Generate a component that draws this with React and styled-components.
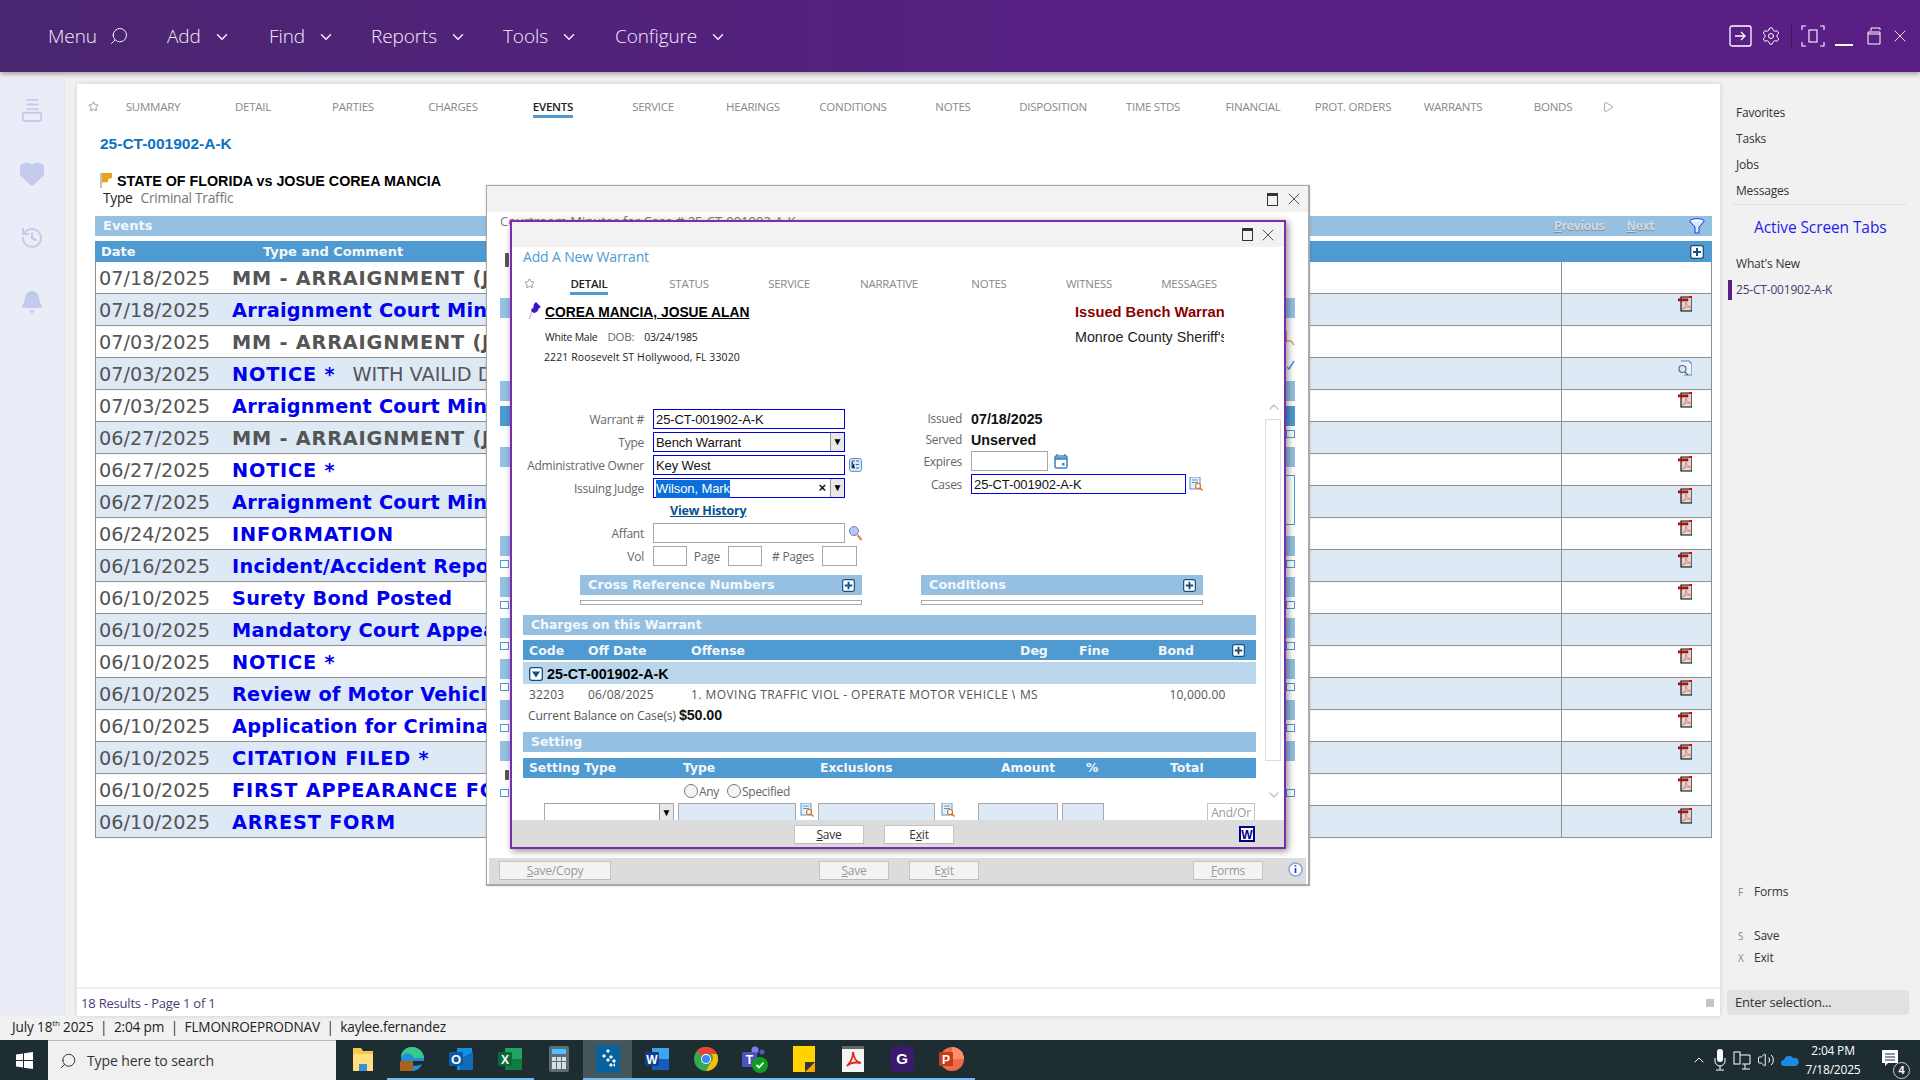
import React from 'react';
import styled, { createGlobalStyle } from 'styled-components';
import { Search, ChevronDown, Settings, X, Star, Heart, History, Bell, ChevronUp, Play, Volume2 } from 'lucide-react';

const Global = createGlobalStyle`
  html, body { margin: 0; padding: 0; width: 1920px; height: 1080px; overflow: hidden; background: #f1f1f2; }
  * { box-sizing: border-box; }
  body { font-family: "Open Sans", "Liberation Sans", sans-serif; }
`;
const VERDANA = `"DejaVu Sans", Verdana, sans-serif`;
const ARIAL = `"Liberation Sans", Arial, sans-serif`;

const Page = styled.div`width:1920px;height:1080px;display:flex;flex-direction:column;position:relative;overflow:hidden;`;
const TopBar = styled.header`height:72px;flex:none;background:linear-gradient(90deg,#4a2670,#581f84 60%,#591f85);display:flex;align-items:center;justify-content:space-between;padding-left:48px;box-shadow:0 2px 5px rgba(0,0,0,.35);position:relative;z-index:2;`;
const NavGrid = styled.nav`display:grid;grid-template-columns:119px 102px 102px 132px 112px auto;align-items:center;`;
const NavItem = styled.div`display:flex;align-items:center;gap:12px;color:#f4eefa;font-size:19px;font-weight:300;letter-spacing:-.1px;`;
const Caret = styled.span`display:inline-flex;margin-top:2px;`;
const Flip = styled.span`display:inline-flex;transform:scaleX(-1);`;
const WinTools = styled.div`display:flex;align-items:center;color:#fff;padding-right:10px;`;
const ToolBox = styled.span`display:inline-flex;align-items:center;justify-content:center;width:${p => p.$w}px;height:24px;margin-left:${p => p.$ml || 0}px;`;
const ToolSep = styled.span`width:1px;height:24px;background:#3d1460;margin:0 9px 0 10px;`;

const Main = styled.div`flex:1;display:flex;min-height:0;`;
const SideRail = styled.aside`width:65px;margin-top:6px;background:#eaedf7;display:flex;flex-direction:column;align-items:center;gap:40px;padding-top:20px;color:#c3cbea;border-right:1px solid #e3e5ee;`;
const Card = styled.section`width:1643px;margin:12px 0 0 12px;background:#fff;box-shadow:0 0 5px rgba(0,0,0,.14);display:flex;flex-direction:column;position:relative;`;
const TabRow = styled.div`display:flex;align-items:flex-start;height:21px;margin-left:${p => p.$ml || 0}px;margin-top:${p => p.$mt}px;`;
const StarCell = styled.span`width:26px;flex:none;display:flex;justify-content:center;color:#666;padding:3px 0 0 6px;`;
const TabCell = styled.div`width:100px;display:flex;justify-content:center;flex:none;`;
const TabLabel = styled.span`font-size:11.5px;line-height:17px;height:20px;letter-spacing:-.25px;color:${p => p.$active ? '#222' : '#888'};font-weight:${p => p.$active ? 600 : 400};border-bottom:${p => p.$active ? '3px solid #4f9ad0' : 'none'};`;
const MoreArrow = styled.span`display:flex;margin:3px 0 0 -1px;color:#555;`;
const CaseNo = styled.h2`margin:15px 0 0 23px;height:20px;font:bold 15.5px/20px ${ARIAL};color:#0b72c4;`;
const TitleRow = styled.div`margin:18px 0 0 23px;height:18px;display:flex;align-items:center;gap:4px;font:bold 14.3px/18px ${ARIAL};color:#000;`;
const TypeRow = styled.div`margin:-1px 0 0 26px;height:17px;display:flex;gap:8px;font-size:13.8px;line-height:17px;letter-spacing:-.3px;color:#222;`;
const Muted = styled.span`color:#777;`;
const EventsWrap = styled.div`margin:10px 8px 0 18px;`;
const LightBar = styled.div`height:20px;background:#95c0e2;color:#f3f8fc;font:bold 13px/20px ${VERDANA};padding-left:8px;display:flex;align-items:center;`;
const BarSpacer = styled.span`flex:1;`;
const FilterGap = styled.span`width:7px;flex:none;`;
const GhostLink = styled.span`font:bold 11.5px/20px ${VERDANA};color:#cad9e8;text-shadow:0 1px 1px #8a8a8a;margin-right:${p => p.$mr}px;letter-spacing:-.7px;& u{text-decoration:underline;}`;
const HeadRow = styled.div`margin-top:5px;height:21px;background:#4f9ad0;color:#f2f7fb;font:bold 13px/21px ${VERDANA};display:flex;align-items:center;`;
const HeadCell = styled.span`width:${p => p.$w}px;padding-left:${p => p.$pl}px;flex:none;`;
const EventRow = styled.div`height:32px;display:grid;grid-template-columns:136px 1fr 150px;background:${p => p.$alt ? '#dde9f4' : '#fff'};border:1px solid #909090;border-top:none;`;
const DateCell = styled.div`font:19.3px/33px ${VERDANA};color:#555;padding-left:3px;overflow:hidden;`;
const TypeCell = styled.div`white-space:nowrap;overflow:hidden;font:bold 19.3px/33px ${VERDANA};letter-spacing:${p => p.$caps ? .8 : .25}px;color:${p => p.$link ? '#0000ee' : '#555'};`;
const Comment = styled.span`font-weight:400;color:#555;margin-left:17px;letter-spacing:0;`;
const ActionCell = styled.div`border-left:1px solid #909090;display:flex;justify-content:flex-end;padding:2px 19px 0 0;`;
const CardFoot = styled.footer`margin-top:auto;height:29px;border-top:2px solid #f0f0f0;display:flex;align-items:center;justify-content:space-between;padding:0 6px 0 4px;font-size:13px;color:#4b3a72;letter-spacing:-.2px;`;
const MiniSquare = styled.span`width:8px;height:8px;background:#c4c4c4;`;

const RightPanel = styled.aside`flex:1;display:flex;flex-direction:column;padding:28px 11px 0 7px;`;
const PanelLink = styled.div`height:26px;line-height:26px;padding-left:9px;font-size:12px;letter-spacing:-.2px;color:#333;`;
const PanelRule = styled.div`height:1px;background:#e2e2e2;margin:0 2px 0 5px;`;
const ActiveTitle = styled.div`height:30px;margin:7px 0 9px 27px;font-size:15.5px;line-height:30px;color:#1d1dee;letter-spacing:-.1px;white-space:nowrap;`;
const CurrentTab = styled.div`height:20px;line-height:20px;margin:3px 0 0 1px;padding-left:4px;border-left:4px solid #581f84;font-size:12px;letter-spacing:-.2px;color:#4b3a72;`;
const ShortcutRow = styled.div`display:flex;height:22px;line-height:22px;font-size:12px;letter-spacing:-.2px;padding-left:11px;color:#333;margin-top:${p => p.$mt || 0}px;`;
const ShortcutKey = styled.span`width:16px;color:#888;font-size:10px;`;
const EnterBox = styled.div`height:25px;margin-top:21px;background:#e1e1e1;border-radius:4px;padding-left:8px;font-size:13px;line-height:25px;color:#333;letter-spacing:-.2px;width:182px;`;

const StatusBar = styled.div`height:24px;flex:none;padding-left:12px;font-size:13.6px;line-height:22px;color:#222;letter-spacing:-.15px;& sup{font-size:8px;line-height:0;}& i{font-style:normal;margin:0 6.5px;color:#333;}`;
const Taskbar = styled.footer`height:40px;flex:none;background:#1d2d32;display:flex;align-items:stretch;position:relative;`;
const WinStart = styled.div`width:48px;display:flex;align-items:center;justify-content:center;`;
const SearchBox = styled.div`width:288px;background:#f0f0f0;border-top:1px solid #bbb;display:flex;align-items:center;gap:10px;padding-left:11px;font-size:14px;color:#333;letter-spacing:-.1px;`;
const AppList = styled.div`display:flex;margin-left:2px;`;
const AppSlot = styled.div`width:49px;display:flex;align-items:center;justify-content:center;background:${p => p.$active ? '#46565b' : 'transparent'};border-bottom:2px solid ${p => p.$open ? '#76b9ed' : 'transparent'};`;
const Tray = styled.div`margin-left:auto;display:flex;align-items:center;color:#fff;padding-right:10px;gap:6px;`;
const Clock = styled.div`width:68px;text-align:center;font-size:12px;line-height:19px;color:#fff;letter-spacing:-.2px;margin-left:-6px;`;
const NoteWrap = styled.div`position:relative;width:28px;height:32px;margin-left:9px;`;
const NoteGlyph = styled.svg`display:block;margin-top:6px;`;
const NoteBadge = styled.span`position:absolute;right:0;bottom:-3px;width:17px;height:17px;border-radius:50%;background:#1d2d32;border:1px solid #ccc;color:#fff;font:bold 11px/15px ${ARIAL};text-align:center;`;

/* Windows on the desktop */
const Outer = styled.div`position:absolute;left:486px;top:185px;width:824px;height:701px;background:#fff;border:1px solid #aaa;border-width:1px 2px 2px 1px;display:flex;flex-direction:column;z-index:3;box-shadow:0 0 2px rgba(0,0,0,.2);`;
const WinTitle = styled.div`height:${p => p.$h}px;flex:none;background:#f2f2f2;display:flex;align-items:center;justify-content:flex-end;gap:${p => p.$gap}px;padding-right:${p => p.$pr}px;color:#333;`;
const RestoreGlyph = styled.span`width:11px;height:13px;border:1px solid #333;border-top-width:3px;display:block;`;
const OuterBody = styled.div`flex:1;padding:1px 13px 0 13px;overflow:hidden;`;
const OuterCaption = styled.div`height:16px;font-size:13px;line-height:16px;color:#777;`;
const UnderBar = styled.div`height:20px;margin-top:${p => p.$mt}px;background:${p => p.$dark ? '#4f9ad0' : '#95c0e2'};`;
const UnderSquares = styled.div`height:8px;margin-top:${p => p.$mt}px;display:flex;justify-content:space-between;`;
const UnderSquare = styled.span`width:9px;height:8px;border:1px solid #4f9ad0;background:#fff;`;
const UnderMarks = styled.div`height:${p => p.$h}px;margin-top:${p => p.$mt}px;display:flex;justify-content:space-between;align-items:flex-start;`;
const UnderStub = styled.span`width:4px;height:${p => p.$h}px;background:#555;border-radius:1px;margin-left:5px;`;
const UnderTall = styled.span`width:10px;height:${p => p.$h}px;border:1px solid #4f9ad0;border-left:none;`;
const OuterFoot = styled.div`height:26px;flex:none;background:#dcdcdc;margin:0 2px;display:flex;align-items:center;padding:0 3px 1px 10px;gap:20px;`;
const GhostBtn = styled.button`width:${p => p.$w}px;height:19px;background:#f3f3f3;border:1px solid #c4c4c4;border-bottom-color:#bbb;font-size:12px;line-height:15px;color:#999;padding:0;margin-left:${p => p.$ml || 0}px;font-family:"Open Sans",sans-serif;letter-spacing:-.2px;`;
const Btn = styled(GhostBtn)`background:#fff;color:#333;`;
const Inner = styled.div`position:absolute;left:510px;top:220px;width:776px;height:629px;background:#fff;border:2px solid #7a2db0;display:flex;flex-direction:column;z-index:4;box-shadow:2px 2px 7px rgba(0,0,0,.45);`;
const InnerBody = styled.div`flex:1;min-height:0;overflow:hidden;position:relative;padding-left:11px;`;
const PageTitle = styled.div`height:20px;font-size:14px;line-height:20px;color:#4f9ad0;letter-spacing:-.15px;`;
const Person = styled.div`display:flex;justify-content:space-between;margin-top:7px;padding-left:22px;width:701px;`;
const PersonLeft = styled.div`display:flex;flex-direction:column;`;
const PersonRight = styled.div`width:149px;overflow:hidden;white-space:nowrap;font:14px/18px ${ARIAL};`;
const PersonName = styled.div`position:relative;height:18px;font:bold 13.8px/20px ${ARIAL};color:#000;text-decoration:underline;`;
const Pin = styled.span`position:absolute;left:-17px;top:-1px;`;
const PersonMeta = styled.div`height:18px;margin-top:${p => p.$mt}px;margin-left:${p => p.$ml || 0}px;font-size:10.5px;line-height:18px;color:#222;letter-spacing:${p => p.$ls ?? -.25}px;& span{color:#666;margin:0 10px 0 10px;font-size:11.5px;}`;
const Warn = styled.div`height:18px;color:#8b0000;font-weight:bold;font-size:14.7px;line-height:18px;`;
const Agency = styled.div`height:18px;margin-top:7px;color:#222;font-size:14.3px;`;
const FormGrid = styled.div`margin-top:43px;display:flex;margin-left:-11px;height:156px;`;
const FormLeft = styled.div`width:385px;flex:none;display:flex;flex-direction:column;`;
const FormRow = styled.div`display:flex;align-items:center;height:20px;margin-bottom:${p => p.$mb ?? 3}px;`;
const FieldLabel = styled.label`width:${p => p.$w || 132}px;flex:none;text-align:right;font-size:12px;letter-spacing:-.25px;color:#666;margin-right:${p => p.$mr ?? 9}px;`;
const TextBox = styled.div`width:${p => p.$w || 192}px;height:20px;flex:none;margin-left:${p => p.$ml || 0}px;border:1px solid ${p => p.$plain ? '#a8a8a8' : '#0000e0'};background:${p => p.$fill ? '#dde9f4' : '#fff'};font:13px/18px ${ARIAL};color:#111;padding:1px 0 0 2px;display:flex;align-items:center;white-space:nowrap;letter-spacing:-.1px;position:relative;`;
const Selected = styled.span`background:#0a6fd8;color:#fff;`;
const DropBtn = styled.span`position:absolute;right:0;top:0;bottom:0;width:14px;background:#e8e8e8;border-left:1px solid #999;display:flex;align-items:center;justify-content:center;font-size:10px;color:#000;line-height:1;`;
const ClearX = styled.span`position:absolute;right:18px;top:0;line-height:18px;font-size:13px;font-weight:bold;color:#111;`;
const SideIcon = styled.span`display:inline-flex;margin-left:${p => p.$ml}px;`;
const HistoryLink = styled.a`height:18px;margin:4px 0 3px 141px;width:120px;padding-left:17px;font-family:"Open Sans",sans-serif;font-weight:700;font-size:12.500px;line-height:18px;color:#0a4f8f;text-decoration:underline;letter-spacing:-.2px;`;
const FormRight = styled.div`display:flex;flex-direction:column;`;
const InfoRow = styled.div`display:flex;align-items:center;height:${p => p.$h}px;padding-bottom:${p => p.$pb || 0}px;margin-bottom:${p => p.$mb || 0}px;`;
const RLabel = styled.span`width:65px;text-align:right;margin-right:9px;font-size:12px;letter-spacing:-.3px;color:#666;`;
const Strong = styled.span`font:bold 14.3px ${ARIAL};color:#111;`;
const Split = styled.div`display:flex;margin:10px 0 0 57px;gap:59px;`;
const SplitCol = styled.div`width:282px;`;
const SmallBar = styled(LightBar)`justify-content:space-between;padding:0 7px 0 8px;font-size:12.8px;`;
const EmptyBox = styled.div`height:5px;margin-top:5px;border:1px solid #a8a8a8;`;
const WideBar = styled(LightBar)`width:733px;margin-top:${p => p.$mt}px;padding-left:8px;font-size:12.4px;`;
const ChargeGrid = styled.div`width:733px;height:20px;margin-top:${p => p.$mt || 0}px;padding-left:6px;display:grid;grid-template-columns:59px 103px 329px 59px 79px 1fr;align-items:center;`;
const ChargeHead = styled(ChargeGrid)`background:#4f9ad0;color:#f2f7fb;font:bold 12.5px ${VERDANA};`;
const ChargeRowText = styled(ChargeGrid)`font-size:12px;color:#555;letter-spacing:.2px;`;
const Clip = styled.span`overflow:hidden;white-space:nowrap;margin-right:5px;letter-spacing:.45px;`;
const BondCell = styled.span`display:flex;justify-content:${p => p.$center ? 'center' : 'space-between'};align-items:center;padding-right:${p => p.$center ? 19 : 11}px;`;
const GroupRow = styled.div`width:733px;height:22px;margin-top:2px;background:#b9d6ec;display:flex;align-items:center;gap:4px;padding:2px 0 0 6px;font:bold 14.3px ${ARIAL};color:#000;`;
const Balance = styled.div`height:20px;margin-top:2px;padding-left:5px;font-size:12px;line-height:20px;letter-spacing:-.1px;color:#555;`;
const SettingHead = styled(ChargeHead)`margin-top:6px;padding-left:6px;grid-template-columns:154px 137px 181px 85px 84px 1fr;font-size:12.3px;`;
const RadioRow = styled.div`height:20px;margin:3px 0 2px 161px;display:flex;align-items:center;font-size:12px;color:#666;letter-spacing:-.3px;`;
const Radio = styled.span`width:14px;height:14px;border:1px solid #777;border-radius:50%;background:#f4f4f4;margin-right:1px;margin-left:${p => p.$ml || 0}px;`;
const FieldRow = styled.div`display:flex;align-items:flex-start;height:22px;padding-left:21px;`;
const FakeBtn = styled.span`width:48px;height:20px;margin-left:${p => p.$ml}px;border:1px solid #c4c4c4;font-size:12px;line-height:18px;color:#999;text-align:center;letter-spacing:-.2px;`;
const ScrollTrack = styled.div`position:absolute;right:3px;top:172px;width:16px;height:342px;border:1px solid #ddd;background:#fff;`;
const ScrollUp = styled.span`position:absolute;right:2px;top:152px;color:#c8c8c8;display:flex;`;
const ScrollDown = styled.span`position:absolute;right:2px;top:540px;color:#c8c8c8;display:flex;`;
const InnerFoot = styled.div`height:27px;flex:none;background:#dcdcdc;display:flex;align-items:center;padding:1px 29px 0 282px;gap:20px;`;
const FootPush = styled.span`margin-left:auto;display:flex;`;

/* drawings */
const PdfIcon = () => (
  <svg width="14" height="16" viewBox="0 0 14 16"><path d="M3 1h11v14H3z" fill="#d8d8d8" stroke="#000" strokeWidth="1.100"/><path d="M0 2.800h10v2.200H0z" fill="#f00" stroke="#000" strokeWidth=".4"/><path d="M11 0h3v2h-3z" fill="#f00"/><path d="M8 6c1 4 3 5 5 5M8 6c0 4-2 6-3.500 7.500M4.500 13c2-2 5-2.500 8-2" fill="none" stroke="#f26a5a" strokeWidth=".8"/></svg>
);
const DocSearch = () => (
  <svg width="14" height="16" viewBox="0 0 14 16"><path d="M3 1h8l3 3v11H6" fill="#f0f4f8" stroke="#5b86b8" strokeWidth="1.2"/><circle cx="4.500" cy="9" r="3.500" fill="#dbe8f4" stroke="#4a6f9d" strokeWidth="1.200"/><path d="M7 12l3 3" stroke="#4a6f9d" strokeWidth="1.400"/></svg>
);
const PlusBox = ({ size = 14 }) => (
  <svg width={size} height={size} viewBox="0 0 14 14"><rect x=".7" y=".7" width="12.600" height="12.600" rx="2" fill="#fff" stroke="#164f7d" strokeWidth="1.300"/><path d="M7 3v8M3 7h8" stroke="#164f7d" strokeWidth="2"/></svg>
);
const Filter = () => (
  <svg width="16" height="16" viewBox="0 0 16 16"><ellipse cx="8" cy="3" rx="7" ry="2.300" fill="#fff" stroke="#0b3fe0"/><path d="M1 3.500l5 5.500v6h4V9l5-5.500" fill="#dce9f6" stroke="#0b3fe0"/></svg>
);
const Flag = () => (
  <svg width="13" height="16" viewBox="0 0 13 16"><path d="M1 0v15" stroke="#999" strokeWidth="1.200"/><path d="M2 0h10v5l-4 1v3l-6 .5z" fill="#eaa21a"/></svg>
);
const Stack = () => (
  <svg width="22" height="24" viewBox="0 0 24 26" fill="none" stroke="#c3cbea" strokeWidth="2"><path d="M6 2h13M6 7h13M6 12h13"/><path d="M2 15v8a2 2 0 0 0 2 2h16a2 2 0 0 0 2-2v-8"/><path d="M2 16h20"/></svg>
);
const ExitBox = () => (
  <svg width="23" height="22" viewBox="0 0 23 22" fill="none" stroke="#fff" strokeWidth="1.300"><rect x="1" y="1" width="21" height="20" rx="2"/><path d="M6 11h10M12 7l4 4-4 4"/></svg>
);
const Focus = () => (
  <svg width="24" height="22" viewBox="0 0 24 22" fill="none" stroke="#fff" strokeWidth="1.100"><path d="M1 5V1h4M19 1h4v4M23 17v4h-4M5 21H1v-4"/><rect x="8" y="5" width="8" height="12"/></svg>
);
const Minimize = () => <svg width="18" height="22" viewBox="0 0 18 22"><path d="M0 20h18" stroke="#fff" strokeWidth="2"/></svg>;
const Restore = () => (
  <svg width="15" height="18" viewBox="0 0 15 18" fill="none" stroke="#fff"><path d="M4 4V1h9v2M1 5h12v12H1zM1 7h12"/></svg>
);
const DocTree = () => (
  <svg width="13" height="14" viewBox="0 0 13 14"><rect x=".6" y=".6" width="11.800" height="12.800" rx="2" fill="#dfeaf6" stroke="#4f8fca"/><path d="M3 3h3M3 3v7h3M3 6.500h3M7 3h3M7 6.500h3M7 10h3" stroke="#2f6ea8"/></svg>
);
const Calendar = () => (
  <svg width="14" height="15" viewBox="0 0 14 15"><path d="M3 0v3M11 0v3" stroke="#3f86c4" strokeWidth="1.500"/><rect x="1" y="2" width="12" height="12" rx="1.500" fill="#fff" stroke="#3f86c4" strokeWidth="1.600"/><path d="M1 4.500h12" stroke="#3f86c4" strokeWidth="2.500"/><rect x="8" y="9" width="2.500" height="2.500" fill="#3f86c4"/></svg>
);
const DocFind = () => (
  <svg width="14" height="14" viewBox="0 0 14 14"><rect x="1" y="0" width="10" height="12" fill="#e6f0fa" stroke="#5a93c8"/><path d="M3 3h6M3 5.500h6" stroke="#5a93c8"/><circle cx="9" cy="9" r="2.500" fill="#fff" stroke="#e07020" strokeWidth="1.200"/><path d="M11 11l2.500 2.500" stroke="#e07020" strokeWidth="1.500"/></svg>
);
const Magnify = () => (
  <svg width="15" height="16" viewBox="0 0 15 16"><circle cx="6" cy="6" r="4.500" fill="#b8c8f4" stroke="#6a7cc4"/><path d="M9.500 10l4 5" stroke="#d8904a" strokeWidth="2.200"/></svg>
);
const PinIcon = () => (
  <svg width="14" height="18" viewBox="0 0 14 18"><path d="M8 0l5 5-2 1-2 4-4-3 1-5z" fill="#3a10c8"/><path d="M4 6l5 4-3 1-3-2z" fill="#3a10c8"/><path d="M4 10l-3 7" stroke="#aaa"/></svg>
);
const CollapseBox = () => (
  <svg width="14" height="14" viewBox="0 0 14 14"><rect x=".7" y=".7" width="12.600" height="12.600" rx="2" fill="#fff" stroke="#164f7d" strokeWidth="1.300"/><path d="M3 4.500h8L7 10.500z" fill="#164f7d"/></svg>
);
const WordMark = () => (
  <svg width="16" height="16" viewBox="0 0 16 16"><rect width="16" height="16" fill="#00008b"/><rect x="1.500" y="1.500" width="13" height="13" fill="#fff" stroke="#00008b"/><text x="8" y="12.500" textAnchor="middle" fontFamily="Liberation Sans" fontWeight="700" fontSize="12" fill="#00008b">W</text></svg>
);
const InfoBubble = () => (
  <svg width="15" height="18" viewBox="0 0 15 18"><circle cx="7.500" cy="7.500" r="6.500" fill="#fff" stroke="#8aa6dc" strokeWidth="1.500"/><path d="M7.500 6v5M7.500 3v1.500" stroke="#2440c0" strokeWidth="1.700"/><path d="M9 14l1 4 2-5" fill="#c8d4ee"/></svg>
);
const CheckMark = () => <svg width="8" height="10" viewBox="0 0 8 10"><path d="M0 7l2 2 5-8" fill="none" stroke="#4f9ad0" strokeWidth="1.500"/></svg>;
const OrangeLens = () => <svg width="10" height="16" viewBox="0 0 10 16"><path d="M1 1v10h5l3 4" fill="none" stroke="#e07020" strokeWidth="1.200"/></svg>;
const WinLogo = () => (
  <svg width="17" height="17" viewBox="0 0 17 17" fill="#fff"><path d="M0 2.400l7-1V8H0zM8 1.200L17 0v8H8zM0 9h7v6.600l-7-1zM8 9h9v8l-9-1.200z"/></svg>
);
const MicSolid = () => (
  <svg width="14" height="24" viewBox="0 0 14 24"><rect x="4" y="1" width="6" height="13" rx="3" fill="#fff"/><path d="M2 10v3a5 5 0 0 0 10 0v-3M7 18v4M3 22h8" fill="none" stroke="#fff"/></svg>
);
const T = ({ children, x = 12, y = 17, s = 12, c = '#fff' }) => (
  <text x={x} y={y} textAnchor="middle" fontFamily="Liberation Sans" fontWeight="700" fontSize={s} fill={c}>{children}</text>
);
const taskIcons = [
  { key: 'files', open: false, svg: <svg width="24" height="26" viewBox="0 0 24 26"><path d="M2 2h8l2 3h10v20H2z" fill="#f7c948"/><path d="M2 8h20v17H2z" fill="#ffdf80"/><path d="M8 25v-7h8v7z" fill="#3b8fd4"/></svg> },
  { key: 'edge', open: true, svg: <svg width="26" height="26" viewBox="0 0 26 26"><path d="M2 12C2 5 7 1 13 1c7 0 12 5 12 11v3H10c1 5 7 6 13 3-2 5-6 7-10 7C6 25 2 19 2 12z" fill="#1f8fd6"/><path d="M2 12C4 6 13 6 15 12H25C24 5 19 1 13 1 7 1 2 5 2 12z" fill="#39c98c"/><rect x="1" y="15" width="13" height="10" rx="1" fill="#a8641c"/></svg> },
  { key: 'outlook', open: true, svg: <svg width="26" height="26" viewBox="0 0 26 26"><path d="M9 2h15v22H9z" fill="#1490df"/><path d="M12 13l13-7v18H12z" fill="#0f6cbd"/><rect x="1" y="6" width="14" height="14" rx="1" fill="#0a5aa5"/><T x={8} y={18} s={13}>O</T></svg> },
  { key: 'excel', open: true, svg: <svg width="26" height="26" viewBox="0 0 26 26"><path d="M8 2h17v22H8z" fill="#21a366"/><path d="M8 13h17v11H8z" fill="#107c41"/><rect x="1" y="6" width="14" height="14" rx="1" fill="#0b6a38"/><T x={8} y={18} s={12}>X</T></svg> },
  { key: 'calc', open: false, svg: <svg width="20" height="26" viewBox="0 0 20 26"><rect width="20" height="26" rx="2" fill="#5d6d76"/><rect x="3" y="3" width="14" height="5" fill="#4cc2ff"/><path d="M3 11h4v4H3zM8 11h4v4H8zM13 11h4v4h-4zM3 16h4v7H3zM8 16h4v7H8zM13 16h4v7h-4z" fill="#d8dfe3"/></svg> },
  { key: 'app', open: true, active: true, svg: <svg width="24" height="28" viewBox="0 0 24 28"><rect width="24" height="28" fill="#06639c"/><path d="M12 4l2 2-2 2-2-2zM8 9l2 2-2 2-2-2zM15 10l2 2-2 2-2-2zM12 13l2 2-2 2-2-2zM18 14l2 2-2 2-2-2zM15 18l2 2-2 2-2-2zM19 22l-2-2 2-2z" fill="#fff"/></svg> },
  { key: 'word', open: true, svg: <svg width="26" height="26" viewBox="0 0 26 26"><path d="M8 2h17v22H8z" fill="#41a5ee"/><path d="M8 13h17v11H8z" fill="#185abd"/><rect x="1" y="6" width="14" height="14" rx="1" fill="#103f91"/><T x={8} y={18} s={12}>W</T></svg> },
  { key: 'chrome', open: true, svg: <svg width="26" height="26" viewBox="0 0 26 26"><circle cx="13" cy="13" r="12" fill="#34a853"/><path d="M13 1a12 12 0 0 1 11 7H13a5 5 0 0 0-5 2L4 4a12 12 0 0 1 9-3z" fill="#ea4335"/><path d="M24 8a12 12 0 0 1-11 17l5-9a5 5 0 0 0 0-8z" fill="#fbbc05"/><circle cx="13" cy="13" r="5" fill="#fff"/><circle cx="13" cy="13" r="4" fill="#4285f4"/></svg> },
  { key: 'teams', open: true, svg: <svg width="28" height="28" viewBox="0 0 28 28"><circle cx="14" cy="5" r="3.500" fill="#7b83eb"/><circle cx="21" cy="7" r="2.500" fill="#5059c9"/><rect x="1" y="7" width="15" height="15" rx="1.500" fill="#4b53bc"/><T x={8.500} y={19} s={12}>T</T><circle cx="19" cy="20" r="8" fill="#0f9d1f"/><path d="M15.500 20l2.500 2.500 4.500-5" stroke="#fff" strokeWidth="1.800" fill="none"/></svg> },
  { key: 'sticky', open: true, svg: <svg width="22" height="26" viewBox="0 0 22 26"><path d="M0 0h22v16l-10 10H0z" fill="#ffd400"/><path d="M12 26l10-10v10z" fill="#f5a800"/><path d="M12 26V16h10z" fill="#333"/></svg> },
  { key: 'acrobat', open: true, svg: <svg width="22" height="26" viewBox="0 0 22 26"><path d="M0 0h22v26H0z" fill="#f4f4f4"/><path d="M0 0h22v3H0z" fill="#666"/><path d="M11 6c1 7 3 10 8 11M11 6c0 6-3 11-6 14M5 20c3-3 9-4 14-3" fill="none" stroke="#e02c20" strokeWidth="1.800"/></svg> },
  { key: 'q', open: true, svg: <svg width="24" height="26" viewBox="0 0 24 26"><path d="M4 0h16l4 4v18l-4 4H4l-4-4V4z" fill="#3a1a6a"/><T x={12} y={18} s={15}>G</T></svg> },
  { key: 'ppt', open: true, svg: <svg width="26" height="26" viewBox="0 0 26 26"><circle cx="14" cy="13" r="12" fill="#ed6c47"/><path d="M14 1a12 12 0 0 1 12 12H14z" fill="#ff8f6b"/><rect x="1" y="6" width="14" height="14" rx="1" fill="#c43e1c"/><T x={8} y={18} s={12}>P</T></svg> },
];

const tabs = ['SUMMARY','DETAIL','PARTIES','CHARGES','EVENTS','SERVICE','HEARINGS','CONDITIONS','NOTES','DISPOSITION','TIME STDS','FINANCIAL','PROT. ORDERS','WARRANTS','BONDS'];
const innerTabs = ['DETAIL','STATUS','SERVICE','NARRATIVE','NOTES','WITNESS','MESSAGES'];
const rows = [
  ['07/18/2025','MM - ARRAIGNMENT (JUDGE)',0,null],
  ['07/18/2025','Arraignment Court Minutes',1,'pdf'],
  ['07/03/2025','MM - ARRAIGNMENT (JUDGE)',0,null],
  ['07/03/2025','NOTICE *',1,'doc','WITH VAILID DRIVERS LICENSE'],
  ['07/03/2025','Arraignment Court Minutes',1,'pdf'],
  ['06/27/2025','MM - ARRAIGNMENT (JUDGE)',0,null],
  ['06/27/2025','NOTICE *',1,'pdf'],
  ['06/27/2025','Arraignment Court Minutes',1,'pdf'],
  ['06/24/2025','INFORMATION',1,'pdf'],
  ['06/16/2025','Incident/Accident Report',1,'pdf'],
  ['06/10/2025','Surety Bond Posted',1,'pdf'],
  ['06/10/2025','Mandatory Court Appearance',1,null],
  ['06/10/2025','NOTICE *',1,'pdf'],
  ['06/10/2025','Review of Motor Vehicle Report',1,'pdf'],
  ['06/10/2025','Application for Criminal',1,'pdf'],
  ['06/10/2025','CITATION FILED *',1,'pdf'],
  ['06/10/2025','FIRST APPEARANCE FORM',1,'pdf'],
  ['06/10/2025','ARREST FORM',1,'pdf'],
];
const nav = ['Menu','Add','Find','Reports','Tools','Configure'];

function UnderLayer() {
  const repeated = [0, 1, 2, 3, 4];
  return (
    <>
      <OuterCaption>Courtroom Minutes for Case # 25-CT-001902-A-K</OuterCaption>
      <UnderMarks $h={14} $mt={24}><UnderStub $h={14} /></UnderMarks>
      <UnderBar $mt={31} />
      <UnderMarks $h={16} $mt={12}><span /><OrangeLens /></UnderMarks>
      <UnderMarks $h={10} $mt={14}><span /><CheckMark /></UnderMarks>
      <UnderBar $mt={11} />
      <UnderBar $mt={5} $dark />
      <UnderSquares $mt={4}><span /><UnderSquare /></UnderSquares>
      <UnderBar $mt={9} />
      <UnderMarks $h={50} $mt={8}><span /><UnderTall $h={50} /></UnderMarks>
      {repeated.map(i => (
        <React.Fragment key={i}>
          <UnderBar $mt={i === 0 ? 11 : 9} />
          <UnderSquares $mt={4}><UnderSquare /><UnderSquare /></UnderSquares>
        </React.Fragment>
      ))}
      <UnderBar $mt={9} />
      <UnderMarks $h={10} $mt={9}><UnderStub $h={10} /></UnderMarks>
      <UnderSquares $mt={9}><UnderSquare /><UnderSquare /></UnderSquares>
    </>
  );
}

export default function App() {
  return (
    <Page>
      <Global />
      <TopBar>
        <NavGrid>
          {nav.map((n, i) => (
            <NavItem key={n}>
              {n}
              {i === 0
                ? <Flip><Search size={20} strokeWidth={1.2} /></Flip>
                : <Caret><ChevronDown size={18} strokeWidth={2} /></Caret>}
            </NavItem>
          ))}
        </NavGrid>
        <WinTools>
          <ExitBox />
          <ToolBox $w={20} $ml={9}><Settings size={20} strokeWidth={1.200} /></ToolBox>
          <ToolSep />
          <Focus />
          <ToolBox $w={18} $ml={10}><Minimize /></ToolBox>
          <ToolBox $w={15} $ml={14}><Restore /></ToolBox>
          <ToolBox $w={20} $ml={8}><X size={24} strokeWidth={1} /></ToolBox>
        </WinTools>
      </TopBar>

      <Main>
        <SideRail>
          <Stack />
          <Heart size={24} viewBox="2 2.500 20 20" fill="#c3cbea" stroke="#c3cbea" />
          <History size={24} strokeWidth={2} />
          <Bell size={24} fill="#c3cbea" />
        </SideRail>
        <Card>
          <TabRow $mt={14}>
            <StarCell><Star size={11} strokeWidth={1.400} /></StarCell>
            {tabs.map(t => <TabCell key={t}><TabLabel $active={t === 'EVENTS'}>{t}</TabLabel></TabCell>)}
            <MoreArrow><Play size={12} strokeWidth={1} /></MoreArrow>
          </TabRow>
          <CaseNo>25-CT-001902-A-K</CaseNo>
          <TitleRow><Flag />STATE OF FLORIDA vs JOSUE COREA MANCIA</TitleRow>
          <TypeRow>Type <Muted>Criminal Traffic</Muted></TypeRow>
          <EventsWrap>
            <LightBar>
              Events<BarSpacer />
              <GhostLink $mr={22}><u>P</u>revious</GhostLink>
              <GhostLink $mr={35}><u>N</u>ext</GhostLink>
              <Filter />
              <FilterGap />
            </LightBar>
            <HeadRow>
              <HeadCell $w={168} $pl={6}>Date</HeadCell>
              <HeadCell $w={1427} $pl={0}>Type and Comment</HeadCell>
              <PlusBox />
            </HeadRow>
            {rows.map(([d, t, link, act, c], i) => (
              <EventRow key={i} $alt={i % 2 === 1}>
                <DateCell>{d}</DateCell>
                <TypeCell $link={!!link} $caps={t === t.toUpperCase()}>{t}{c && <Comment>{c}</Comment>}</TypeCell>
                <ActionCell>{act === 'pdf' ? <PdfIcon /> : act === 'doc' ? <DocSearch /> : null}</ActionCell>
              </EventRow>
            ))}
          </EventsWrap>
          <CardFoot>18 Results - Page 1 of 1<MiniSquare /></CardFoot>
        </Card>
        <RightPanel>
          <PanelLink>Favorites</PanelLink>
          <PanelLink>Tasks</PanelLink>
          <PanelLink>Jobs</PanelLink>
          <PanelLink>Messages</PanelLink>
          <PanelRule />
          <ActiveTitle>Active Screen Tabs</ActiveTitle>
          <PanelLink>What's New</PanelLink>
          <CurrentTab>25-CT-001902-A-K</CurrentTab>
          <ShortcutRow $mt={581}><ShortcutKey>F</ShortcutKey>Forms</ShortcutRow>
          <ShortcutRow $mt={22}><ShortcutKey>S</ShortcutKey>Save</ShortcutRow>
          <ShortcutRow><ShortcutKey>X</ShortcutKey>Exit</ShortcutRow>
          <EnterBox>Enter selection...</EnterBox>
        </RightPanel>
      </Main>

      <StatusBar>July 18<sup>th</sup> 2025<i>|</i>2:04 pm<i>|</i>FLMONROEPRODNAV<i>|</i>kaylee.fernandez</StatusBar>
      <Taskbar>
        <WinStart><WinLogo /></WinStart>
        <SearchBox><Flip><Search size={18} strokeWidth={1.300} /></Flip>Type here to search</SearchBox>
        <AppList>
          {taskIcons.map(a => <AppSlot key={a.key} $open={a.open} $active={a.active}>{a.svg}</AppSlot>)}
        </AppList>
        <Tray>
          <ChevronUp size={16} strokeWidth={1.500} />
          <MicSolid />
          <svg width="18" height="20" viewBox="0 0 18 20" fill="none" stroke="#fff"><rect x="1" y="2" width="6" height="12"/><path d="M7 5h10v9H9M9 19h8M12 14v5"/></svg>
          <Volume2 size={18} strokeWidth={1.300} />
          <svg width="18" height="14" viewBox="0 0 18 14"><path d="M3 13a3 3 0 0 1 0-6 5 5 0 0 1 9-2 4 4 0 0 1 3 8z" fill="#1e88e5"/></svg>
          <Clock>2:04 PM<br />7/18/2025</Clock>
          <NoteWrap>
            <NoteGlyph width="16" height="16" viewBox="0 0 16 16"><path d="M0 0h16v13H6l-3 3v-3H0z" fill="#fff"/><path d="M3 4h10M3 7h10M3 10h10" stroke="#1d2d32"/></NoteGlyph>
            <NoteBadge>4</NoteBadge>
          </NoteWrap>
        </Tray>
      </Taskbar>

      <Outer>
        <WinTitle $h={26} $pr={4} $gap={6}><RestoreGlyph /><X size={20} strokeWidth={1} /></WinTitle>
        <OuterBody><UnderLayer /></OuterBody>
        <OuterFoot>
          <GhostBtn $w={112}><u>S</u>ave/Copy</GhostBtn>
          <GhostBtn $w={70} $ml={188}><u>S</u>ave</GhostBtn>
          <GhostBtn $w={70}>E<u>x</u>it</GhostBtn>
          <GhostBtn $w={70} $ml={194}><u>F</u>orms</GhostBtn>
          <FootPush><InfoBubble /></FootPush>
        </OuterFoot>
      </Outer>

      <Inner>
        <WinTitle $h={25} $pr={6} $gap={5}><RestoreGlyph /><X size={20} strokeWidth={1} /></WinTitle>
        <InnerBody>
          <PageTitle>Add A New Warrant</PageTitle>
          <TabRow $mt={8} $ml={-10}>
            <StarCell><Star size={11} strokeWidth={1.400} /></StarCell>
            {innerTabs.map(t => <TabCell key={t}><TabLabel $active={t === 'DETAIL'}>{t}</TabLabel></TabCell>)}
          </TabRow>
          <Person>
            <PersonLeft>
              <PersonName><Pin><PinIcon /></Pin>COREA MANCIA, JOSUE ALAN</PersonName>
              <PersonMeta $mt={7}>White Male<span>DOB:</span>03/24/1985</PersonMeta>
              <PersonMeta $mt={2} $ml={-1} $ls={.1}>2221 Roosevelt ST Hollywood, FL 33020</PersonMeta>
            </PersonLeft>
            <PersonRight>
              <Warn>Issued Bench Warrant</Warn>
              <Agency>Monroe County Sheriff's Office</Agency>
            </PersonRight>
          </Person>
          <FormGrid>
            <FormLeft>
              <FormRow><FieldLabel>Warrant #</FieldLabel><TextBox>25-CT-001902-A-K</TextBox></FormRow>
              <FormRow><FieldLabel>Type</FieldLabel><TextBox>Bench Warrant<DropBtn>▼</DropBtn></TextBox></FormRow>
              <FormRow><FieldLabel>Administrative Owner</FieldLabel><TextBox>Key West</TextBox><SideIcon $ml={4}><DocTree /></SideIcon></FormRow>
              <FormRow $mb={0}><FieldLabel>Issuing Judge</FieldLabel><TextBox><Selected>Wilson, Mark</Selected><ClearX>×</ClearX><DropBtn>▼</DropBtn></TextBox></FormRow>
              <HistoryLink>View History</HistoryLink>
              <FormRow><FieldLabel>Affant</FieldLabel><TextBox $plain /><SideIcon $ml={3}><Magnify /></SideIcon></FormRow>
              <FormRow $mb={0}>
                <FieldLabel>Vol</FieldLabel><TextBox $plain $w={34} />
                <FieldLabel $w={33} $mr={8}>Page</FieldLabel><TextBox $plain $w={34} />
                <FieldLabel $w={52} $mr={8}># Pages</FieldLabel><TextBox $plain $w={35} />
              </FormRow>
            </FormLeft>
            <FormRight>
              <InfoRow $h={21} $pb={2}><RLabel>Issued</RLabel><Strong>07/18/2025</Strong></InfoRow>
              <InfoRow $h={21} $pb={2}><RLabel>Served</RLabel><Strong>Unserved</Strong></InfoRow>
              <InfoRow $h={20} $mb={3}><RLabel>Expires</RLabel><TextBox $plain $w={77} /><SideIcon $ml={6}><Calendar /></SideIcon></InfoRow>
              <InfoRow $h={20}><RLabel>Cases</RLabel><TextBox $w={215}>25-CT-001902-A-K</TextBox><SideIcon $ml={3}><DocFind /></SideIcon></InfoRow>
            </FormRight>
          </FormGrid>
          <Split>
            <SplitCol><SmallBar>Cross Reference Numbers<PlusBox size={13} /></SmallBar><EmptyBox /></SplitCol>
            <SplitCol><SmallBar>Conditions<PlusBox size={13} /></SmallBar><EmptyBox /></SplitCol>
          </Split>
          <WideBar $mt={10}>Charges on this Warrant</WideBar>
          <ChargeHead $mt={5}>
            <span>Code</span><span>Off Date</span><span>Offense</span><span>Deg</span><span>Fine</span>
            <BondCell>Bond<PlusBox size={13} /></BondCell>
          </ChargeHead>
          <GroupRow><CollapseBox />25-CT-001902-A-K</GroupRow>
          <ChargeRowText>
            <span>32203</span><span>06/08/2025</span><Clip>1. MOVING TRAFFIC VIOL - OPERATE MOTOR VEHICLE WITHOUT</Clip><span>MS</span><span />
            <BondCell $center>10,000.00</BondCell>
          </ChargeRowText>
          <Balance>Current Balance on Case(s) <Strong>$50.00</Strong></Balance>
          <WideBar $mt={6}>Setting</WideBar>
          <SettingHead>
            <span>Setting Type</span><span>Type</span><span>Exclusions</span><span>Amount</span><span>%</span><span>Total</span>
          </SettingHead>
          <RadioRow><Radio />Any<Radio $ml={8} />Specified</RadioRow>
          <FieldRow>
            <TextBox $plain $w={130}><DropBtn>▼</DropBtn></TextBox>
            <TextBox $plain $fill $w={118} $ml={4} />
            <SideIcon $ml={4}><DocFind /></SideIcon>
            <TextBox $plain $fill $w={117} $ml={4} />
            <SideIcon $ml={6}><DocFind /></SideIcon>
            <TextBox $plain $fill $w={80} $ml={23} />
            <TextBox $plain $fill $w={42} $ml={4} />
            <FakeBtn $ml={103}>And/Or</FakeBtn>
          </FieldRow>
          <ScrollUp><ChevronUp size={16} strokeWidth={2.400} /></ScrollUp>
          <ScrollTrack />
          <ScrollDown><ChevronDown size={16} strokeWidth={2.400} /></ScrollDown>
        </InnerBody>
        <InnerFoot>
          <Btn $w={70}><u>S</u>ave</Btn>
          <Btn $w={70}>E<u>x</u>it</Btn>
          <FootPush><WordMark /></FootPush>
        </InnerFoot>
      </Inner>
    </Page>
  );
}
